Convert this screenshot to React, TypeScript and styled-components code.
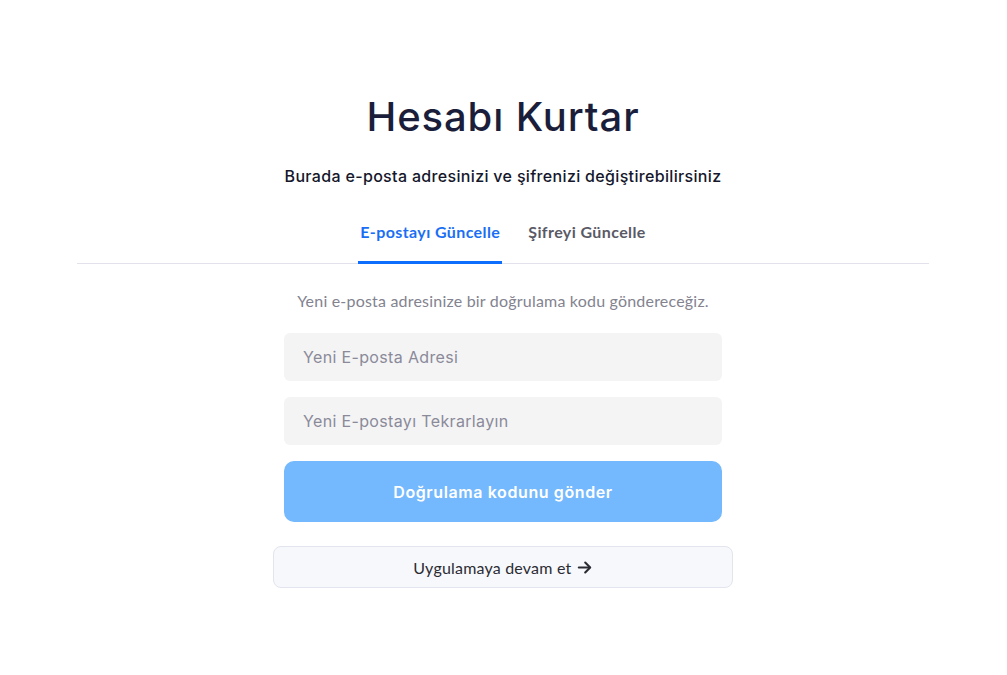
import React from "react";
import styled, { createGlobalStyle } from "styled-components";

const Global = createGlobalStyle`
  html, body { margin: 0; padding: 0; background: #ffffff; }
  * { box-sizing: border-box; }
`;

const heading = `"Inter", "Noto Sans", sans-serif`;
const body = `"Lato", "Noto Sans", sans-serif`;

const Page = styled.div`
  padding-top: 87px;
  padding-right: 1px;
  display: flex;
  justify-content: center;
`;

const Container = styled.div`
  width: 852px;
  display: flex;
  flex-direction: column;
  align-items: center;
`;

const Title = styled.h1`
  margin: 0;
  font-family: ${heading};
  font-weight: 500;
  font-size: 40px;
  line-height: 60px;
  color: #1b1e3a;
  letter-spacing: 0.9px;
`;

const Subtitle = styled.p`
  margin: 17px 0 0;
  font-family: ${heading};
  font-weight: 500;
  font-size: 16px;
  line-height: 24px;
  color: #15172b;
  letter-spacing: 0.33px;
`;

const Tabs = styled.div`
  margin-top: 22px;
  width: 100%;
  display: flex;
  justify-content: center;
  gap: 24px;
  border-bottom: 1px solid #e2e2ea;
`;

const Tab = styled.button<{ $active?: boolean }>`
  appearance: none;
  background: none;
  border: none;
  margin: 0 0 -1px;
  padding: 11px 2px 18px;
  font-family: ${body};
  font-weight: 700;
  font-size: 16px;
  line-height: 22px;
  letter-spacing: 0.4px;
  color: ${(p) => (p.$active ? "#1a6ef5" : "#5a5a66")};
  border-bottom: 3px solid ${(p) => (p.$active ? "#0d6efd" : "transparent")};
  cursor: pointer;
`;

const Form = styled.div`
  width: 438px;
  display: flex;
  flex-direction: column;
  align-items: stretch;
  gap: 16px;
`;

const Helper = styled.p`
  margin: 26px 0 5px;
  text-align: center;
  font-family: ${body};
  font-size: 16px;
  line-height: 22px;
  letter-spacing: 0.2px;
  color: #83838f;
`;

const Input = styled.input`
  height: 48px;
  border: none;
  border-radius: 6px;
  background: #f4f4f5;
  padding: 0 19px;
  font-family: ${heading};
  font-size: 16px;
  letter-spacing: 0.35px;
  color: #333;
  outline: none;
  &::placeholder { color: #8a8a99; }
`;

const Primary = styled.button`
  height: 61px;
  border: none;
  border-radius: 10px;
  background: #74b8fe;
  color: #ffffff;
  font-family: ${heading};
  font-weight: 600;
  font-size: 16px;
  letter-spacing: 0.6px;
  cursor: pointer;
`;

const Continue = styled.button`
  margin-top: 24px;
  width: 460px;
  height: 42px;
  border: 1px solid #e2e4ee;
  border-radius: 8px;
  background: #f7f8fc;
  color: #2b2b33;
  font-family: ${body};
  font-size: 16px;
  letter-spacing: 0.2px;
  display: flex;
  align-items: center;
  justify-content: center;
  gap: 0;
  cursor: pointer;
`;

const Arrow = () => (
  <svg width="17" height="17" viewBox="0 0 24 24" fill="none" stroke="#2b2b33" strokeWidth="3" strokeLinecap="round" strokeLinejoin="round">
    <path d="M4 12h15" />
    <path d="M13 5l7 7-7 7" />
  </svg>
);

export default function App() {
  return (
    <>
      <Global />
      <Page>
        <Container>
          <Title>Hesabı Kurtar</Title>
          <Subtitle>Burada e-posta adresinizi ve şifrenizi değiştirebilirsiniz</Subtitle>
          <Tabs>
            <Tab $active>E-postayı Güncelle</Tab>
            <Tab>Şifreyi Güncelle</Tab>
          </Tabs>
          <Form>
            <Helper>Yeni e-posta adresinize bir doğrulama kodu göndereceğiz.</Helper>
            <Input placeholder="Yeni E-posta Adresi" />
            <Input placeholder="Yeni E-postayı Tekrarlayın" />
            <Primary>Doğrulama kodunu gönder</Primary>
          </Form>
          <Continue>
            Uygulamaya devam et&nbsp;<Arrow />
          </Continue>
        </Container>
      </Page>
    </>
  );
}
